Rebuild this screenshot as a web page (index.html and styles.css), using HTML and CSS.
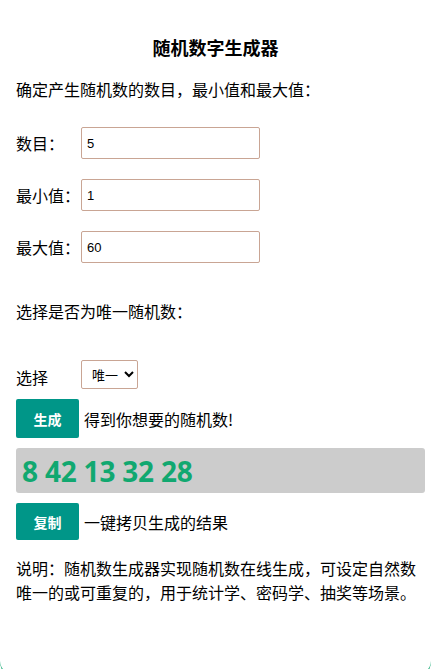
FILE: index.html
```html
<!DOCTYPE html>
<html lang="zh">
<head>
<meta charset="utf-8">
<link rel="stylesheet" href="styles.css">
</head>
<body>
<div class="page">
  <h1 class="title">随机数字生成器</h1>
  <p class="intro">确定产生随机数的数目，最小值和最大值：</p>
  <div class="field first"><label class="lbl">数目：</label><input class="inp" type="text" value="5"></div>
  <div class="field"><label class="lbl">最小值：</label><input class="inp" type="text" value="1"></div>
  <div class="field"><label class="lbl">最大值：</label><input class="inp" type="text" value="60"></div>
  <p class="unique">选择是否为唯一随机数：</p>
  <div class="field sel-row"><label class="lbl">选择</label>
    <select class="sel"><option>唯一</option><option>可重复</option></select>
  </div>
  <div class="action"><button class="btn">生成</button><span class="hint">得到你想要的随机数!</span></div>
  <div class="result">8 42 13 32 28</div>
  <div class="action copy"><button class="btn">复制</button><span class="hint">一键拷贝生成的结果</span></div>
  <p class="desc">说明：随机数生成器实现随机数在线生成，可设定自然数唯一的或可重复的，用于统计学、密码学、抽奖等场景。</p>
</div>
</body>
</html>
```
FILE: styles.css
```css
html, body {
  margin: 0;
  padding: 0;
  background: #fff;
}
body {
  font-family: "Noto Sans CJK SC", "Noto Sans", sans-serif;
  font-size: 16px;
  color: #000;
  overflow: hidden;
}
.page {
  padding: 27px 6px 40px 16px;
  border-bottom: 4px solid #11a870;
  border-radius: 0 0 20px 20px;
  box-sizing: border-box;
  height: 681px;
}
.title {
  margin: 0;
  text-align: center;
  font-size: 18px;
  font-weight: 700;
  line-height: 40px;
  padding-right: 10px;
}
.intro {
  margin: 10px 0 0;
  line-height: 24px;
}
.field {
  display: flex;
  align-items: center;
  margin-top: 20px;
}
.field.first {
  margin-top: 26px;
}
.lbl {
  width: 65px;
  flex: none;
  line-height: 24px;
}
.inp {
  width: 179px;
  height: 32px;
  box-sizing: border-box;
  border: 1px solid #c9a594;
  border-radius: 2px;
  padding: 0 5px;
  font-family: "Liberation Sans", Arial, sans-serif;
  font-size: 13px;
  color: #000;
  outline: none;
}
.unique {
  margin: 36px 0 0;
  line-height: 24px;
}
.sel-row {
  margin-top: 37px;
}
.sel-row .lbl {
  padding-top: 4px;
}
.sel {
  width: 57px;
  height: 29px;
  border: 1px solid #c9a594;
  border-radius: 2px;
  background: #fff;
  font-family: "Noto Sans CJK SC", sans-serif;
  font-size: 13px;
  color: #000;
  padding: 0 2px 0 6px;
}
.action {
  display: flex;
  align-items: center;
  margin-top: 10px;
}
.action.copy {
  margin-top: 10px;
}
.btn {
  width: 63px;
  height: 39px;
  border: none;
  border-radius: 2px;
  background: #009688;
  color: #fff;
  font-family: "Noto Sans CJK SC", sans-serif;
  font-size: 14px;
  font-weight: 700;
  padding: 0;
  margin-right: 5px;
}
.copy .btn {
  height: 37px;
}
.hint {
  line-height: 24px;
}
.result {
  margin-top: 10px;
  height: 45px;
  background: #cccccc;
  border-radius: 3px;
  padding-left: 6px;
  font-family: "Open Sans", "Noto Sans", sans-serif;
  font-weight: 700;
  font-size: 28px;
  line-height: 47px;
  color: #11a870;
  letter-spacing: -0.2px;
}
.desc {
  margin: 16px 0 0;
  line-height: 24px;
}
```
